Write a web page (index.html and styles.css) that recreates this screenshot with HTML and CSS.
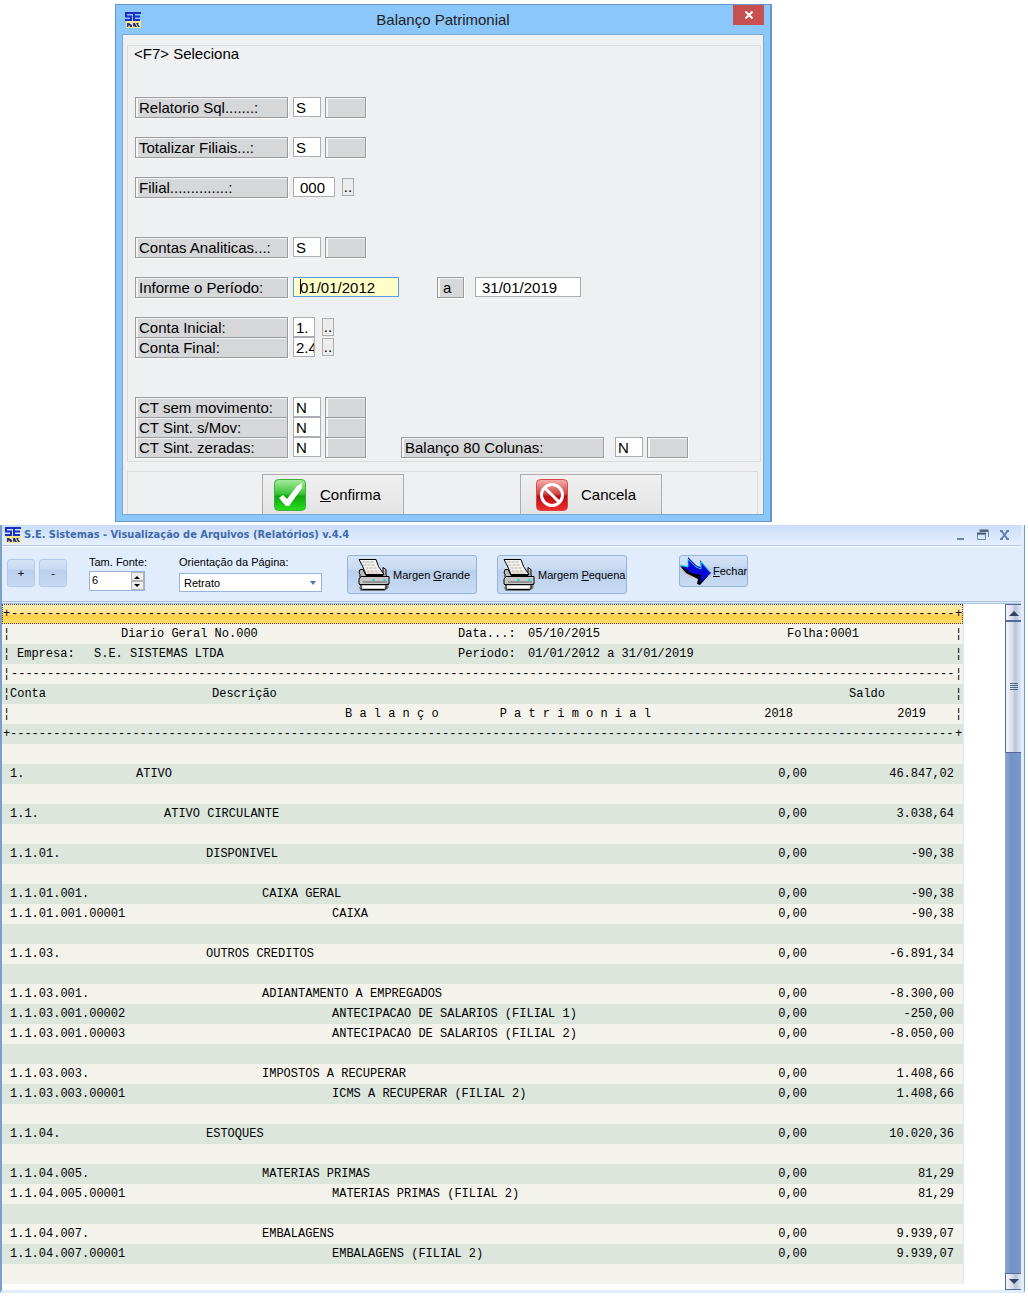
FILE: index.html
```html
<!DOCTYPE html>
<html lang="pt-BR">
<head>
<meta charset="utf-8">
<title>Balanço Patrimonial</title>
<link rel="stylesheet" href="styles.css">
</head>
<body>
<svg class="defs" aria-hidden="true">
  <defs>
    <linearGradient id="green" x1="0" y1="0" x2="0" y2="1"><stop offset="0" stop-color="#a8eb9f"/><stop offset=".45" stop-color="#3fc53a"/><stop offset=".55" stop-color="#0ca90c"/><stop offset="1" stop-color="#2ae01c"/></linearGradient>
    <linearGradient id="red" x1="0" y1="0" x2="0" y2="1"><stop offset="0" stop-color="#f3b0ab"/><stop offset=".45" stop-color="#cf4a4a"/><stop offset=".55" stop-color="#b80c14"/><stop offset="1" stop-color="#f0302c"/></linearGradient>
    <symbol id="logo" viewBox="0 0 16 16">
      <rect x="1" y="8" width="15" height="8" fill="#f6e58a"/>
      <path d="M8 1H1v3.500h5V8H0M16 1H9v7h6M9 4.500h6" fill="none" stroke="#1a2fc5" stroke-width="2"/>
      <path d="M2 11h2l3 2v2H5l-1-2-1 2H2zM8 11h2l2 4h-2l-1-1-1 1zM11 11h3l-1 1 2 3h-2z" fill="#24348f"/>
    </symbol>
    <symbol id="printer" viewBox="0 0 32 32">
      <path d="M1 27l4 4h20l6-6v4l-4 3H3z" fill="#777"/>
      <path d="M2.500 10.500h3l3 6h17V8.500l3 2v6l3 2H2.500V15l-1-1z" fill="#bbb" stroke="#000"/>
      <path d="M1.500.500H18.500L21 7.500L26.500 15.500H8.500L5 7z" fill="#f2f2ee" stroke="#000"/>
      <path d="M5 3h12M6 6h12M8 9h12M9 12h13M10 14h13" stroke="#b9aea5" stroke-dasharray="3 1" fill="none"/>
      <path d="M3.500 17.500H31.500V25L28.500 25.500V29.500L27 30.500H5L3.500 29.500V26L1.500 25V20z" fill="#c5c5c5" stroke="#000"/>
      <path d="M2 25.500h29" stroke="#000"/><path d="M6 23h23" stroke="#000" stroke-dasharray="1 1"/>
      <path d="M5 28h22" stroke="#fff" stroke-width="2"/><path d="M15 21h2M26 21h2" stroke="#0dd" stroke-width="2"/>
    </symbol>
  </defs>
</svg>

<form class="dialog">
  <header class="dialog-title">
    <svg class="logo"><use href="#logo"/></svg>
    <h1>Balanço Patrimonial</h1>
    <button type="button" class="dialog-close" aria-label="Fechar janela"><svg width="10" height="8" viewBox="0 0 10 8"><path d="M1.500.500l7 7M8.500.500l-7 7" stroke="#fff" stroke-width="2"/></svg></button>
  </header>
  <div class="dialog-body">
    <section class="fields">
      <p class="hint">&lt;F7&gt; Seleciona</p>
      <div class="row lead"><label class="tag" for="sql">Relatorio Sql.......:</label><input class="box char" id="sql" value="S"><output class="tag note"></output></div>
      <div class="row space"><label class="tag" for="tot">Totalizar Filiais...:</label><input class="box char" id="tot" value="S"><output class="tag note"></output></div>
      <div class="row space"><label class="tag" for="fil">Filial..............:</label><input class="box branch" id="fil" value="000"><button type="button" class="pick">..</button></div>
      <div class="row wide-space"><label class="tag" for="ana">Contas Analiticas...:</label><input class="box char" id="ana" value="S"><output class="tag note"></output></div>
      <div class="row space"><label class="tag" for="ini">Informe o Período:</label><input class="box date active" id="ini" value="01/01/2012"><label class="tag until" for="fim">a</label><input class="box date" id="fim" value="31/01/2019"></div>
      <div class="row space"><label class="tag" for="c1">Conta Inicial:</label><input class="box account" id="c1" value="1."><button type="button" class="pick">..</button></div>
      <div class="row"><label class="tag" for="c2">Conta Final:</label><input class="box account" id="c2" value="2.4"><button type="button" class="pick">..</button></div>
      <div class="row wide-space"><label class="tag" for="mov">CT sem movimento:</label><input class="box char" id="mov" value="N"><output class="tag note"></output></div>
      <div class="row"><label class="tag" for="smov">CT Sint. s/Mov:</label><input class="box char" id="smov" value="N"><output class="tag note"></output></div>
      <div class="row"><label class="tag" for="zer">CT Sint. zeradas:</label><input class="box char" id="zer" value="N"><output class="tag note"></output><label class="tag columns" for="col">Balanço 80 Colunas:</label><input class="box char" id="col" value="N"><output class="tag note"></output></div>
    </section>
    <section class="actions">
      <button type="submit" class="action"><svg width="32" height="32" viewBox="0 0 32 32"><rect x=".5" y=".5" width="31" height="31" rx="4" fill="url(#green)" stroke="#3cae3a"/><path d="M5 19l4-3 4 4L23 7l5-3v5L15 27h-3z" fill="#fff"/></svg><span><u>C</u>onfirma</span></button>
      <button type="button" class="action"><svg width="32" height="32" viewBox="0 0 32 32"><rect x=".5" y=".5" width="31" height="31" rx="4" fill="url(#red)" stroke="#d9474a"/><circle cx="16" cy="16" r="10.500" fill="none" stroke="#fff" stroke-width="3"/><path d="M9 9l14 14" stroke="#fff" stroke-width="3"/></svg><span>Cancela</span></button>
    </section>
  </div>
</form>

<main class="viewer">
  <header class="viewer-title">
    <svg class="logo"><use href="#logo"/></svg>
    <h2>S.E. Sistemas - Visualização de Arquivos (Relatórios) v.4.4</h2>
    <button type="button" aria-label="Minimizar"><svg width="12" height="12"><path d="M2 10h7" stroke="#6485b5" stroke-width="2"/></svg></button>
    <button type="button" aria-label="Restaurar"><svg width="12" height="12"><path d="M3 2.500h8.500V8M.500 5v5.500h8V5z" fill="none" stroke="#6485b5"/><path d="M2.500 1.500h9M0 4.500h9" stroke="#4e5c72" stroke-width="2"/></svg></button>
    <button type="button" aria-label="Fechar visualização"><svg width="12" height="12"><path d="M2.500 2l6 8M8.500 2l-6 8" stroke="#6480a8" stroke-width="2"/><path d="M1 2h3M7 2h3M1 10h3M7 10h3" stroke="#6480a8" stroke-width="2"/></svg></button>
  </header>
  <div class="toolbar">
    <div class="zoom"><button type="button" class="glass square">+</button><button type="button" class="glass square">-</button></div>
    <div class="setting size"><label for="fonte">Tam. Fonte:</label>
      <div class="spinner"><input id="fonte" value="6"><div class="steps"><button type="button" aria-label="Aumentar"><svg width="7" height="4"><path d="M0 4l3-3 3 3z"/></svg></button><button type="button" aria-label="Diminuir"><svg width="7" height="4"><path d="M0 0l3 3 3-3z"/></svg></button></div></div>
    </div>
    <div class="setting page"><label for="orient">Orientação da Página:</label>
      <div class="combo"><select id="orient"><option>Retrato</option><option>Paisagem</option></select><svg width="6" height="4"><path d="M0 0h6L3 4z" fill="#4d7ab5"/></svg></div>
    </div>
    <button type="button" class="glass print"><svg width="33" height="32"><use href="#printer"/></svg><span>Margen <u>G</u>rande</span></button>
    <button type="button" class="glass print"><svg width="33" height="32"><use href="#printer"/></svg><span>Margem <u>P</u>equena</span></button>
    <button type="button" class="glass exit"><svg width="32" height="30" viewBox="0 0 32 30"><path d="M1 13l8 8 13 2-3 6 13-12" fill="#c9bfb3"/><path d="M0 10l6 7 12 6-1 5 3 1 8-9z" fill="#000"/><path d="M0 9l8 2V1l9 9 4 1-1-7 11 13-11 10 1-8-10-2z" fill="#0808d8"/><path d="M0 9l8 2V3l8 8 5 2V6l9 10" fill="none" stroke="#12d8f4" stroke-width="1"/></svg><span><u>F</u>echar</span></button>
  </div>
  <div class="pane">
    <div class="report">
      <div class="line selected"><span class="edge">+</span><span class="rule">-----------------------------------------------------------------------------------------------------------------------------------</span><span class="edge">+</span></div>
      <div class="line meta"><span class="edge">¦</span><span></span><span class="ledger">Diario Geral No.000</span><span>Data...:</span><span>05/10/2015</span><span>Folha:0001</span><span class="edge">¦</span></div>
      <div class="line meta even"><span class="edge">¦</span><span class="company">Empresa:</span><span>S.E. SISTEMAS LTDA</span><span>Período:</span><span>01/01/2012 a 31/01/2019</span><span></span><span class="edge">¦</span></div>
      <div class="line"><span class="edge">¦</span><span class="rule">-----------------------------------------------------------------------------------------------------------------------------------</span><span class="edge">¦</span></div>
      <table>
        <colgroup><col class="c-edge"><col class="c-code"><col><col class="c-prev"><col class="c-cur"><col class="c-end"></colgroup>
        <thead>
          <tr><td class="edge">¦</td><th>Conta</th><th class="h-desc">Descrição</th><th></th><th class="h-saldo">Saldo</th><td class="edge">¦</td></tr>
          <tr><td class="edge">¦</td><th></th><th class="h-title"><span>B a l a n ç o</span><span>P a t r i m o n i a l</span></th><th class="h-prev">2018</th><th class="h-cur">2019</th><td class="edge">¦</td></tr>
          <tr><td class="edge">+</td><td colspan="4" class="rule">-----------------------------------------------------------------------------------------------------------------------------------</td><td class="edge">+</td></tr>
        </thead>
        <tbody>
          <tr><td colspan="6"></td></tr>
          <tr><td></td><td>1.</td><td>ATIVO</td><td>0,00</td><td>46.847,02</td><td></td></tr>
          <tr><td colspan="6"></td></tr>
          <tr><td></td><td>1.1.</td><td class="l2">ATIVO CIRCULANTE</td><td>0,00</td><td>3.038,64</td><td></td></tr>
          <tr><td colspan="6"></td></tr>
          <tr><td></td><td>1.1.01.</td><td class="l3">DISPONIVEL</td><td>0,00</td><td>-90,38</td><td></td></tr>
          <tr><td colspan="6"></td></tr>
          <tr><td></td><td>1.1.01.001.</td><td class="l4">CAIXA GERAL</td><td>0,00</td><td>-90,38</td><td></td></tr>
          <tr><td></td><td>1.1.01.001.00001</td><td class="l5">CAIXA</td><td>0,00</td><td>-90,38</td><td></td></tr>
          <tr><td colspan="6"></td></tr>
          <tr><td></td><td>1.1.03.</td><td class="l3">OUTROS CREDITOS</td><td>0,00</td><td>-6.891,34</td><td></td></tr>
          <tr><td colspan="6"></td></tr>
          <tr><td></td><td>1.1.03.001.</td><td class="l4">ADIANTAMENTO A EMPREGADOS</td><td>0,00</td><td>-8.300,00</td><td></td></tr>
          <tr><td></td><td>1.1.03.001.00002</td><td class="l5">ANTECIPACAO DE SALARIOS (FILIAL 1)</td><td>0,00</td><td>-250,00</td><td></td></tr>
          <tr><td></td><td>1.1.03.001.00003</td><td class="l5">ANTECIPACAO DE SALARIOS (FILIAL 2)</td><td>0,00</td><td>-8.050,00</td><td></td></tr>
          <tr><td colspan="6"></td></tr>
          <tr><td></td><td>1.1.03.003.</td><td class="l4">IMPOSTOS A RECUPERAR</td><td>0,00</td><td>1.408,66</td><td></td></tr>
          <tr><td></td><td>1.1.03.003.00001</td><td class="l5">ICMS A RECUPERAR (FILIAL 2)</td><td>0,00</td><td>1.408,66</td><td></td></tr>
          <tr><td colspan="6"></td></tr>
          <tr><td></td><td>1.1.04.</td><td class="l3">ESTOQUES</td><td>0,00</td><td>10.020,36</td><td></td></tr>
          <tr><td colspan="6"></td></tr>
          <tr><td></td><td>1.1.04.005.</td><td class="l4">MATERIAS PRIMAS</td><td>0,00</td><td>81,29</td><td></td></tr>
          <tr><td></td><td>1.1.04.005.00001</td><td class="l5">MATERIAS PRIMAS (FILIAL 2)</td><td>0,00</td><td>81,29</td><td></td></tr>
          <tr><td colspan="6"></td></tr>
          <tr><td></td><td>1.1.04.007.</td><td class="l4">EMBALAGENS</td><td>0,00</td><td>9.939,07</td><td></td></tr>
          <tr><td></td><td>1.1.04.007.00001</td><td class="l5">EMBALAGENS (FILIAL 2)</td><td>0,00</td><td>9.939,07</td><td></td></tr>
          <tr><td colspan="6"></td></tr>
        </tbody>
      </table>
    </div>
    <div class="scrollbar">
      <button type="button" aria-label="Rolar para cima"><svg width="10" height="6"><path d="M0 6l5-5 5 5z" fill="#33416b"/></svg></button>
      <div class="thumb"><svg width="8" height="8"><path d="M0 .500h8M0 2.500h8M0 4.500h8M0 6.500h8" stroke="#4f668c"/></svg></div>
      <div class="track"></div>
      <button type="button" aria-label="Rolar para baixo"><svg width="10" height="6"><path d="M0 0l5 5 5-5z" fill="#33416b"/></svg></button>
    </div>
  </div>
</main>
</body>
</html>
```
FILE: styles.css
```css
* { box-sizing: border-box; }
body {
  margin: 0;
  padding: 4px 3px 3px 0;
  background: #fff;
  color: #000;
  font-family: "Liberation Sans", Arial, sans-serif;
  font-size: 11px;
}
h1, h2, p { margin: 0; font-weight: normal; }
button, input, select { margin: 0; padding: 0; font: inherit; color: inherit; }
svg { display: block; flex: none; }
.defs { position: absolute; width: 0; height: 0; }
.logo { width: 16px; height: 16px; }

/* Parameter dialog */
.dialog {
  max-width: 657px;
  margin-left: 115px;
  padding: 0 6px 6px;
  background: #8cc7fb;
  border: 1px solid #6698c6;
  border-right-width: 2px;
  font-size: 15px;
}
.dialog-title { display: flex; height: 29px; align-items: center; padding-left: 3px; }
.dialog-title h1 { flex: 1; padding-left: 12px; font-size: 15px; text-align: center; color: #222; }
.dialog-close {
  display: grid;
  place-items: center;
  align-self: flex-start;
  width: 31px;
  height: 20px;
  border: 0;
  background: #c75050;
}
.dialog-body {
  padding: 10px 2px 0 4px;
  background: #eff0f2;
  border: 1px solid #79a9d4;
}
.fields { padding: 0 7px 4px; border: 1px solid #dcdcdc; }
.hint { height: 18px; line-height: 16px; margin-left: -1px; }
.row { display: flex; height: 20px; align-items: flex-start; }
.lead { margin-top: 33px; }
.space { margin-top: 20px; }
.wide-space { margin-top: 40px; }
.tag {
  flex: none;
  width: 153px;
  height: 21px;
  padding-left: 3px;
  line-height: 19px;
  background: #d6d7d9;
  border: 1px solid #9b9b9d;
  box-shadow: 1px 1px #fff, inset 2px 1px #f6f6f7;
  white-space: nowrap;
}
.box {
  flex: none;
  height: 20px;
  margin-left: 5px;
  padding-left: 2px;
  background: #fff;
  border: 1px solid #abadb3;
  border-radius: 0;
}
.char { width: 28px; }
.branch { width: 42px; padding-left: 6px; }
.account { width: 22px; }
.date { width: 106px; padding-left: 6px; }
.active {
  border-color: #569de5;
  background: linear-gradient(#000, #000) 6px 1px / 1px 15px no-repeat #ffffc8;
}
.note { width: 41px; margin-left: 4px; }
.until { width: 27px; margin-left: 38px; padding-left: 5px; }
.until + .box, .columns + .box { margin-left: 11px; }
.columns { width: 203px; margin-left: 35px; }
.pick {
  width: 12px;
  height: 18px;
  margin: 1px 0 0 7px;
  border: 1px solid #acacac;
  background: #ececec;
  line-height: 16px;
}
.actions {
  display: flex;
  gap: 116px;
  height: 43px;
  margin: 9px 3px 0 0;
  padding: 2px 0 0 134px;
  border: 1px solid #dcdcdc;
  border-bottom: 0;
}
.action {
  display: flex;
  align-items: center;
  gap: 14px;
  width: 142px;
  height: 40px;
  padding-left: 11px;
  background: linear-gradient(#f0f0f0, #e4e4e4);
  border: 1px solid #acacac;
  border-bottom: 0;
}
.action:last-child { padding-left: 15px; gap: 13px; }

/* Report viewer */
.viewer {
  margin-top: 3px;
  padding-right: 3px;
  border-left: 2px solid #7ba0cc;
  border-right: 1px solid #6f9bd0;
  border-bottom: 3px solid #e1edfc;
  background: #e1edfc;
}
.viewer-title {
  display: flex;
  align-items: center;
  gap: 10px;
  height: 21px;
  padding: 0 10px 1px 3px;
  background: linear-gradient(#c9ddf9, #e6f0fe);
  border-bottom: 1px solid #b0c6e4;
}
.viewer-title h2 {
  flex: 1;
  margin-left: -7px;
  font: bold 11px "DejaVu Sans Condensed", Verdana, sans-serif;
  color: #3e6aaa;
  white-space: nowrap;
}
.viewer-title button { width: 12px; height: 12px; border: 0; background: none; }
.toolbar {
  display: flex;
  align-items: flex-start;
  height: 58px;
  padding: 8px 0 0 5px;
  border-top: 1px solid #fff;
  border-bottom: 3px double #a9c0de;
}
.zoom { display: flex; gap: 4px; padding-top: 4px; }
.glass {
  display: flex;
  align-items: center;
  border: 1px solid #94b3dd;
  border-radius: 3px;
  background: linear-gradient(#d5e3f6, #c8daf2 35%, #b9cfec 40%, #c9dbf3);
  white-space: nowrap;
}
.square { justify-content: center; width: 28px; height: 28px; border-color: #b1c9ea; }
.setting { display: flex; flex-direction: column; gap: 2px; }
.setting label { height: 14px; line-height: 14px; white-space: nowrap; }
.size { margin-left: 22px; width: 56px; }
.page { margin-left: 34px; width: 143px; gap: 4px; }
.spinner { display: flex; height: 20px; border: 1px solid #94b3dd; background: #fff; }
.spinner input { width: 41px; padding: 0 0 2px 2px; border: 0; background: none; }
.steps { display: flex; flex-direction: column; width: 13px; }
.steps button { display: grid; flex: 1; place-items: center; border: 1px solid #b5b5b5; background: #ededed; }
.combo { position: relative; height: 19px; }
.combo select {
  width: 143px;
  height: 19px;
  padding-left: 4px;
  appearance: none;
  border: 1px solid #94b3dd;
  border-radius: 0;
  background: #fff;
}
.combo svg { position: absolute; right: 6px; top: 8px; }
.print { width: 130px; height: 39px; margin-left: 25px; padding-left: 9px; gap: 3px; }
.print + .print { margin-left: 20px; padding-left: 4px; }
.exit { width: 69px; height: 32px; margin-left: 52px; gap: 1px; }

/* Report listing */
.pane { display: flex; background: #fff; }
.report {
  flex: 1;
  min-width: 0;
  margin: 0 41px 6px 0;
  border-right: 1px solid #dbe9fa;
  font: 12px/20px "Liberation Mono", "Courier New", monospace;
}
.line { display: flex; height: 20px; background: #f4f3eb; white-space: pre; }
.edge { width: 9px; padding-left: 1px; }
.line > .edge { flex: none; width: 9px; }
.rule { flex: 1; min-width: 0; overflow: hidden; }
.selected {
  background: linear-gradient(#fff0b5, #ffe390 45%, #ffd045 60%, #ffdd70);
  outline: 1px dotted #4c4560;
  outline-offset: -1px;
}
.meta { display: grid; grid-template-columns: 8px 84px 364px 70px 259px 1fr 9px; }
.ledger { padding-left: 27px; }
.company { padding-left: 7px; }
.even { background: #dce6dd; }
table { width: 100%; table-layout: fixed; border-collapse: collapse; white-space: nowrap; }
td, th { height: 20px; padding: 0; font-weight: normal; text-align: left; }
.c-edge { width: 8px; }
.c-code { width: 126px; }
.c-prev { width: 100px; }
.c-cur { width: 147px; }
.c-end { width: 9px; }
thead tr:nth-child(odd), tbody tr:nth-child(even) { background: #dce6dd; }
thead tr:nth-child(even), tbody tr:nth-child(odd) { background: #f4f3eb; }
td.edge { padding-left: 1px; }
.h-desc { padding-left: 76px; }
.h-title { padding-left: 209px; }
.h-title span + span { margin-left: 61px; }
.h-saldo { padding-left: 42px; }
.h-prev { padding-right: 14px; text-align: right; }
.h-cur { padding-right: 28px; text-align: right; }
tbody td:nth-child(n+4) { text-align: right; }
.l2 { padding-left: 28px; }
.l3 { padding-left: 70px; }
.l4 { padding-left: 126px; }
.l5 { padding-left: 196px; }

.scrollbar { display: flex; flex-direction: column; width: 16px; background: #7594c4; }
.scrollbar button, .thumb {
  display: grid;
  place-items: center;
  width: 16px;
  height: 17px;
  border: 1px solid #55679b;
  border-right: 0;
  background: linear-gradient(90deg, #f4f6fa, #d6dde9 45%, #b7c4d8 60%, #dfe6f0);
}
.thumb { height: 132px; }
.track { flex: 1; background: linear-gradient(90deg, #8aa8d2, #7292c2 40%, #7a9bcb); }
```
